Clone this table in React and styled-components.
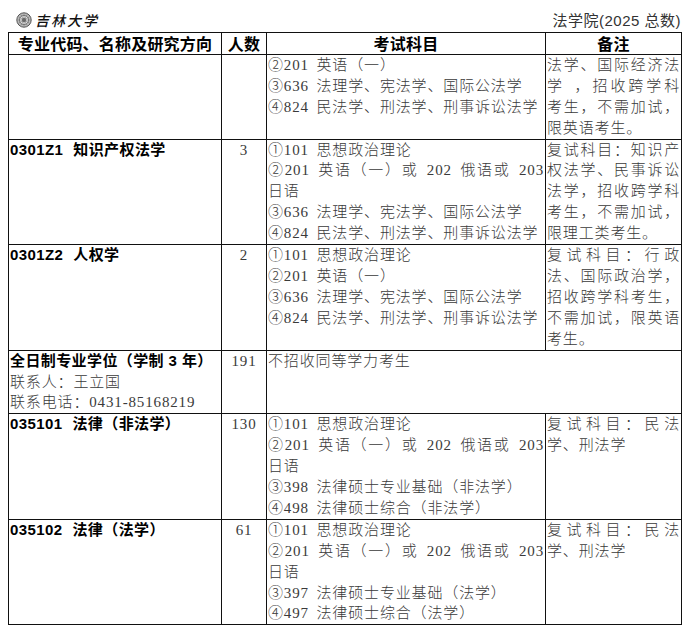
import React from 'react';
import styled, { createGlobalStyle } from 'styled-components';

const GlobalStyle = createGlobalStyle`
  body {
    margin: 8px;
    background: #fff;
    color: #3a3a3a;
    font-family: "Liberation Serif", "Noto Sans CJK SC", serif;
  }
`;

const TopBar = styled.div`
  width: 673px;
  height: 24px;
  display: flex;
  justify-content: space-between;
  align-items: flex-start;
  padding-top: 4px;
  box-sizing: border-box;
`;

const Logo = styled.div`
  display: flex;
  align-items: center;
  gap: 3px;
  padding-left: 8px;
`;

const LogoText = styled.span`
  font-family: "Noto Sans CJK SC", sans-serif;
  font-size: 14px;
  font-weight: 500;
  font-style: italic;
  letter-spacing: 2px;
  color: #111;
  line-height: 16px;
`;

const School = styled.span`
  font-family: "Liberation Sans", "Noto Sans CJK SC", sans-serif;
  font-size: 15px;
  color: #333;
  line-height: 18px;
  letter-spacing: 0.5px;
`;

const Table = styled.table`
  width: 673px;
  border-collapse: collapse;
  table-layout: fixed;
`;

const HeadCell = styled.th`
  border: 1px solid #111;
  padding: 0 1px;
  font-family: "Noto Sans CJK SC", sans-serif;
  font-size: 16px;
  font-weight: 700;
  color: #000;
  line-height: 20.9px;
  text-align: center;
  letter-spacing: 0.2px;
`;

const Cell = styled.td`
  border: 1px solid #111;
  padding: 0 1px;
  vertical-align: top;
  font-size: 15px;
  font-weight: 300;
  line-height: 20.9px;
  letter-spacing: 0.85px;
  word-spacing: 3px;
  text-align: ${(p) => (p.$center ? 'center' : 'left')};
  color: #3a3a3a;
`;

const Name = styled.div`
  font-family: "Liberation Sans", "Noto Sans CJK SC", sans-serif;
  font-weight: 700;
  font-size: 15px;
  letter-spacing: 0.4px;
  word-spacing: 0;
  color: #000;
`;

const Code = styled.span`
  margin-right: 10px;
`;

const Line = styled.div`
  white-space: nowrap;
  text-align: ${(p) => (p.$justify ? 'justify' : 'left')};
  text-align-last: ${(p) => (p.$justify ? 'justify' : 'left')};
`;

const Seal = () => (
  <svg width="16" height="16" viewBox="0 0 16 16">
    <circle cx="8" cy="8" r="7.2" fill="#bbb" stroke="#555" strokeWidth="1" />
    <circle cx="8" cy="8" r="4.6" fill="#ddd" stroke="#666" strokeWidth="0.8" />
    <circle cx="8" cy="8" r="2.2" fill="#777" />
    {[0, 30, 60, 90, 120, 150].map((a) => (
      <line
        key={a}
        x1="8"
        y1="1.5"
        x2="8"
        y2="14.5"
        stroke="#666"
        strokeWidth="0.4"
        transform={`rotate(${a} 8 8)`}
      />
    ))}
  </svg>
);

const J = (t) => ({ t, j: true });

const common = [
  '①101 思想政治理论',
  J('②201 英语（一）或 202 俄语或 203'),
  '日语',
];

const rows = [
  {
    name: [],
    count: '',
    subjects: ['②201 英语（一）', '③636 法理学、宪法学、国际公法学', '④824 民法学、刑法学、刑事诉讼法学'],
    note: [J('法学、国际经济法'), J('学 ，招收跨学科'), J('考生，不需加试，'), '限英语考生。'],
  },
  {
    name: [{ code: '0301Z1', t: '知识产权法学', b: true }],
    count: '3',
    subjects: [...common, '③636 法理学、宪法学、国际公法学', '④824 民法学、刑法学、刑事诉讼法学'],
    note: [J('复试科目：知识产'), J('权法学、民事诉讼'), J('法学，招收跨学科'), J('考生，不需加试，'), '限理工类考生。'],
  },
  {
    name: [{ code: '0301Z2', t: '人权学', b: true }],
    count: '2',
    subjects: ['①101 思想政治理论', '②201 英语（一）', '③636 法理学、宪法学、国际公法学', '④824 民法学、刑法学、刑事诉讼法学'],
    note: [J('复试科目：行政'), J('法、国际政治学，'), J('招收跨学科考生，'), J('不需加试，限英语'), '考生。'],
  },
  {
    name: [
      { t: '全日制专业学位（学制 3 年）', b: true },
      { t: '联系人：王立国' },
      { t: '联系电话：0431-85168219' },
    ],
    count: '191',
    merged: '不招收同等学力考生',
  },
  {
    name: [{ code: '035101', t: '法律（非法学）', b: true }],
    count: '130',
    subjects: [...common, '③398 法律硕士专业基础（非法学）', '④498 法律硕士综合（非法学）'],
    note: [J('复试科目：民法'), '学、刑法学'],
  },
  {
    name: [{ code: '035102', t: '法律（法学）', b: true }],
    count: '61',
    subjects: [...common, '③397 法律硕士专业基础（法学）', '④497 法律硕士综合（法学）'],
    note: [J('复试科目：民法'), '学、刑法学'],
  },
];

const Lines = ({ items }) =>
  items.map((it, i) => {
    const line = typeof it === 'string' ? { t: it } : it;
    return (
      <Line key={i} $justify={line.j}>
        {line.t}
      </Line>
    );
  });

const App = () => (
  <>
    <GlobalStyle />
    <TopBar>
      <Logo>
        <Seal />
        <LogoText>吉林大学</LogoText>
      </Logo>
      <School>法学院(2025 总数)</School>
    </TopBar>
    <Table>
      <colgroup>
        <col style={{ width: 213 }} />
        <col style={{ width: 45 }} />
        <col style={{ width: 279 }} />
        <col style={{ width: 136 }} />
      </colgroup>
      <thead>
        <tr>
          <HeadCell>专业代码、名称及研究方向</HeadCell>
          <HeadCell>人数</HeadCell>
          <HeadCell>考试科目</HeadCell>
          <HeadCell>备注</HeadCell>
        </tr>
      </thead>
      <tbody>
        {rows.map((row, i) => (
          <tr key={i}>
            <Cell>
              {row.name.map((n, k) =>
                n.b ? (
                  <Name key={k}>
                    {n.code && <Code>{n.code}</Code>}
                    {n.t}
                  </Name>
                ) : (
                  <Line key={k}>{n.t}</Line>
                )
              )}
            </Cell>
            <Cell $center>{row.count}</Cell>
            {row.merged ? (
              <Cell colSpan={2}>{row.merged}</Cell>
            ) : (
              <>
                <Cell>
                  <Lines items={row.subjects} />
                </Cell>
                <Cell>
                  <Lines items={row.note} />
                </Cell>
              </>
            )}
          </tr>
        ))}
      </tbody>
    </Table>
  </>
);

export default App;
